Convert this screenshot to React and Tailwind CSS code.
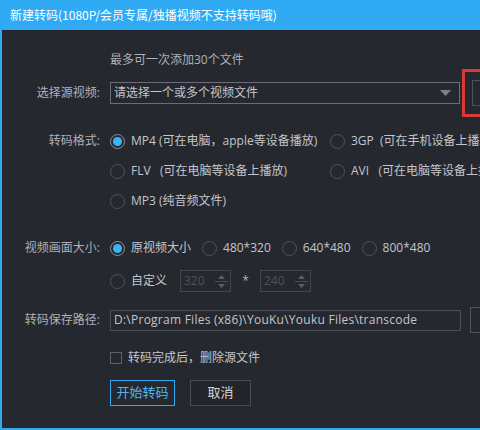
import React from "react";

const FONT = { fontFamily: '"Open Sans", "Noto Sans CJK SC", sans-serif' };
const TITLE_FONT = { fontFamily: '"Noto Sans CJK SC", sans-serif' };

const Radio = ({ checked, children }) => (
  <label className="flex items-center gap-[6px] text-[12px] text-[#c4c6cb] whitespace-nowrap">
    <span
      className={
        "w-[15px] h-[15px] rounded-full border flex items-center justify-center shrink-0 " +
        (checked ? "border-[#8c919b]" : "border-[#4f535c]")
      }
    >
      {checked && <span className="w-[9px] h-[9px] rounded-full bg-[#3bb3f7]" />}
    </span>
    {children}
  </label>
);

const Row = ({ label, className = "", children }) => (
  <div className={"flex items-center " + className}>
    <div className="w-[98px] text-right text-[12px] text-[#aeb1b7] shrink-0">{label}</div>
    <div className="ml-[10px] flex items-center flex-1">{children}</div>
  </div>
);

const SpinBox = ({ value }) => (
  <div className="w-[51px] h-[22px] border border-[#43464e] flex">
    <span className="flex-1 pl-[3px] text-[12px] leading-[20px] text-[#4f525a]">{value}</span>
    <div className="w-[17px] flex flex-col items-center justify-center">
      <svg width="7" height="4" viewBox="0 0 7 4" className="mb-[2px]">
        <path d="M0 4 L3.5 0 L7 4 Z" fill="#5a5d65" />
      </svg>
      <div className="w-[13px] h-px bg-[#4a4d55]" />
      <svg width="7" height="4" viewBox="0 0 7 4" className="mt-[2px]">
        <path d="M0 0 L3.5 4 L7 0 Z" fill="#5a5d65" />
      </svg>
    </div>
  </div>
);

export default function App() {
  return (
    <div className="w-[480px] h-[430px] overflow-hidden" style={FONT}>
      <div className="w-[560px] h-[430px] flex flex-col bg-[#26282f] border-x-2 border-b-2 border-[#2fa9f1]">
        {/* title bar */}
        <div
          className="h-[30px] -mx-[2px] bg-[#30abf3] flex items-center pl-[10px] text-[12px] text-white shrink-0"
          style={TITLE_FONT}
        >
          新建转码(1080P/会员专属/独播视频不支持转码哦)
        </div>

        <div className="mt-[22px] ml-[108px] h-[16px] text-[12px] leading-[16px] text-[#aeb1b7]">
          最多可一次添加30个文件
        </div>

        {/* source file picker */}
        <Row label="选择源视频:" className="mt-[14px] h-[22px] relative">
          <div className="w-[350px] h-[22px] border border-[#6b6e76] flex items-center justify-between pl-[3px] pr-[8px]">
            <span className="text-[12px] text-[#c4c6cb]">请选择一个或多个视频文件</span>
            <svg width="11" height="6" viewBox="0 0 11 6">
              <path d="M0 0 L11 0 L5.5 6 Z" fill="#7d8088" />
            </svg>
          </div>
          <div className="ml-[2px] w-[18px] h-[48px] border-[3px] border-r-0 border-[#d83a3a] flex items-center justify-end">
            <div className="w-[8px] h-[26px] border border-r-0 border-[#50535b]" />
          </div>
        </Row>

        {/* output format */}
        <Row label="转码格式:" className="mt-[22px] h-[30px]">
          <div className="w-[220px]">
            <Radio checked>MP4 (可在电脑，apple等设备播放)</Radio>
          </div>
          <Radio>3GP&nbsp; (可在手机设备上播放)</Radio>
        </Row>
        <Row label="" className="h-[30px]">
          <div className="w-[220px]">
            <Radio>FLV&nbsp;&nbsp; (可在电脑等设备上播放)</Radio>
          </div>
          <Radio>AVI&nbsp;&nbsp; (可在电脑等设备上播放)</Radio>
        </Row>
        <Row label="" className="h-[30px]">
          <Radio>MP3 (纯音频文件)</Radio>
        </Row>

        {/* frame size */}
        <Row label="视频画面大小:" className="mt-[21px] h-[22px]">
          <div className="flex items-center gap-[11px]">
            <Radio checked>原视频大小</Radio>
            <Radio>480*320</Radio>
            <Radio>640*480</Radio>
            <Radio>800*480</Radio>
          </div>
        </Row>
        <Row label="" className="mt-[11px] h-[22px]">
          <div className="w-[70px]">
            <Radio>自定义</Radio>
          </div>
          <SpinBox value="320" />
          <span className="w-[29px] text-center text-[12px] text-[#aeb1b7]">*</span>
          <SpinBox value="240" />
        </Row>

        {/* save path */}
        <Row label="转码保存路径:" className="mt-[18px] h-[20px]">
          <div className="w-[351px] h-[21px] border border-[#4d5058] flex items-center pl-[3px] text-[12px] tracking-[0.25px] text-[#c4c6cb]">
            D:\Program Files (x86)\YouKu\Youku Files\transcode
          </div>
          <div className="ml-[9px] w-[40px] h-[26px] border border-[#50535b]" />
        </Row>

        <Row label="" className="mt-[20px] h-[16px]">
          <span className="w-[12px] h-[12px] border border-[#5f626a]" />
          <span className="ml-[6px] text-[12px] text-[#c4c6cb]">转码完成后，删除源文件</span>
        </Row>

        <Row label="" className="mt-[14px] h-[26px]">
          <button className="w-[65px] h-[26px] border border-[#2fa9f1] text-[13px] text-[#4fb5f0]">
            开始转码
          </button>
          <button className="ml-[15px] w-[61px] h-[26px] border border-[#494c54] bg-[#23252b] text-[13px] text-[#d4d6da]">
            取消
          </button>
        </Row>
      </div>
    </div>
  );
}
